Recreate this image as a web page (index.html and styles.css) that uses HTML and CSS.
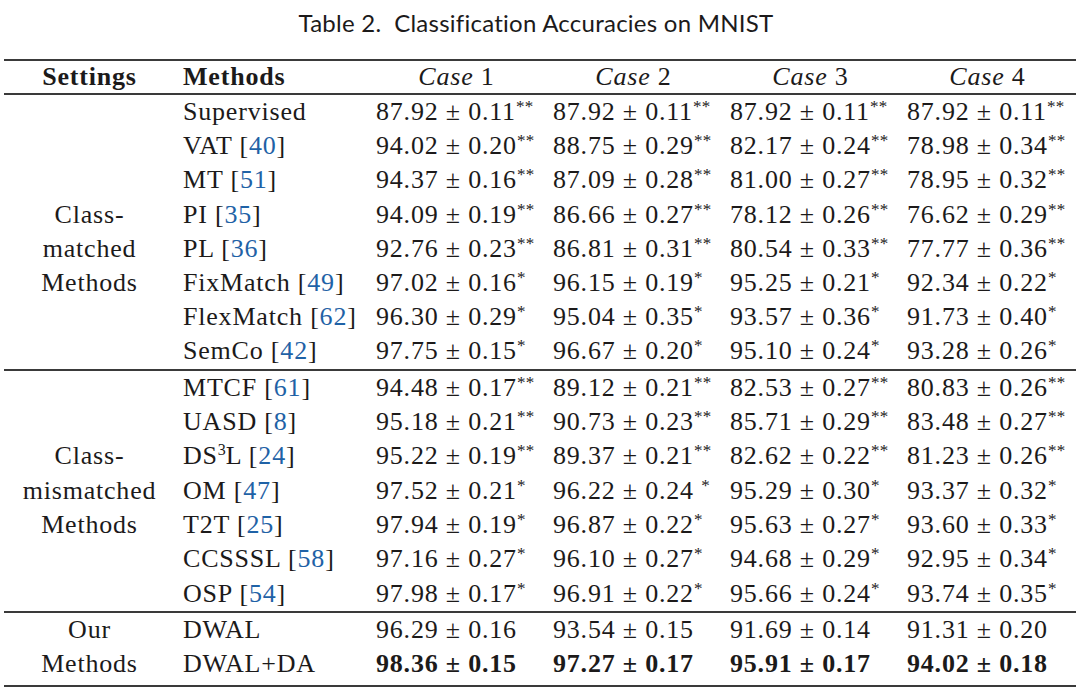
FILE: index.html
```html
<!DOCTYPE html>
<html>
<head>
<meta charset="utf-8">
<link rel="stylesheet" href="styles.css">
</head>
<body>
<div class="page">
  <div class="caption">Table 2.&nbsp; Classification Accuracies on MNIST</div>
  <div class="tbl">
    <div class="grp head">
      <div class="c set b">Settings</div>
      <div class="c m b">Methods</div>
      <div class="c h"><i>Case</i> 1</div>
      <div class="c h"><i>Case</i> 2</div>
      <div class="c h"><i>Case</i> 3</div>
      <div class="c h"><i>Case</i> 4</div>
    </div>
    <div class="grp g1">
      <div class="c set"></div><div class="c m">Supervised</div>
      <div class="c n">87.92 ± 0.11<sup>**</sup></div><div class="c n">87.92 ± 0.11<sup>**</sup></div><div class="c n">87.92 ± 0.11<sup>**</sup></div><div class="c n">87.92 ± 0.11<sup>**</sup></div>

      <div class="c set"></div><div class="c m">VAT [<span class="ref">40</span>]</div>
      <div class="c n">94.02 ± 0.20<sup>**</sup></div><div class="c n">88.75 ± 0.29<sup>**</sup></div><div class="c n">82.17 ± 0.24<sup>**</sup></div><div class="c n">78.98 ± 0.34<sup>**</sup></div>

      <div class="c set"></div><div class="c m">MT [<span class="ref">51</span>]</div>
      <div class="c n">94.37 ± 0.16<sup>**</sup></div><div class="c n">87.09 ± 0.28<sup>**</sup></div><div class="c n">81.00 ± 0.27<sup>**</sup></div><div class="c n">78.95 ± 0.32<sup>**</sup></div>

      <div class="c set">Class-</div><div class="c m">PI [<span class="ref">35</span>]</div>
      <div class="c n">94.09 ± 0.19<sup>**</sup></div><div class="c n">86.66 ± 0.27<sup>**</sup></div><div class="c n">78.12 ± 0.26<sup>**</sup></div><div class="c n">76.62 ± 0.29<sup>**</sup></div>

      <div class="c set">matched</div><div class="c m">PL [<span class="ref">36</span>]</div>
      <div class="c n">92.76 ± 0.23<sup>**</sup></div><div class="c n">86.81 ± 0.31<sup>**</sup></div><div class="c n">80.54 ± 0.33<sup>**</sup></div><div class="c n">77.77 ± 0.36<sup>**</sup></div>

      <div class="c set">Methods</div><div class="c m">FixMatch [<span class="ref">49</span>]</div>
      <div class="c n">97.02 ± 0.16<sup>*</sup></div><div class="c n">96.15 ± 0.19<sup>*</sup></div><div class="c n">95.25 ± 0.21<sup>*</sup></div><div class="c n">92.34 ± 0.22<sup>*</sup></div>

      <div class="c set"></div><div class="c m">FlexMatch [<span class="ref">62</span>]</div>
      <div class="c n">96.30 ± 0.29<sup>*</sup></div><div class="c n">95.04 ± 0.35<sup>*</sup></div><div class="c n">93.57 ± 0.36<sup>*</sup></div><div class="c n">91.73 ± 0.40<sup>*</sup></div>

      <div class="c set"></div><div class="c m">SemCo [<span class="ref">42</span>]</div>
      <div class="c n">97.75 ± 0.15<sup>*</sup></div><div class="c n">96.67 ± 0.20<sup>*</sup></div><div class="c n">95.10 ± 0.24<sup>*</sup></div><div class="c n">93.28 ± 0.26<sup>*</sup></div>
    </div>
    <div class="grp g2">
      <div class="c set"></div><div class="c m">MTCF [<span class="ref">61</span>]</div>
      <div class="c n">94.48 ± 0.17<sup>**</sup></div><div class="c n">89.12 ± 0.21<sup>**</sup></div><div class="c n">82.53 ± 0.27<sup>**</sup></div><div class="c n">80.83 ± 0.26<sup>**</sup></div>

      <div class="c set"></div><div class="c m">UASD [<span class="ref">8</span>]</div>
      <div class="c n">95.18 ± 0.21<sup>**</sup></div><div class="c n">90.73 ± 0.23<sup>**</sup></div><div class="c n">85.71 ± 0.29<sup>**</sup></div><div class="c n">83.48 ± 0.27<sup>**</sup></div>

      <div class="c set">Class-</div><div class="c m">DS<sup class="p">3</sup>L [<span class="ref">24</span>]</div>
      <div class="c n">95.22 ± 0.19<sup>**</sup></div><div class="c n">89.37 ± 0.21<sup>**</sup></div><div class="c n">82.62 ± 0.22<sup>**</sup></div><div class="c n">81.23 ± 0.26<sup>**</sup></div>

      <div class="c set">mismatched</div><div class="c m">OM [<span class="ref">47</span>]</div>
      <div class="c n">97.52 ± 0.21<sup>*</sup></div><div class="c n">96.22 ± 0.24 <sup>*</sup></div><div class="c n">95.29 ± 0.30<sup>*</sup></div><div class="c n">93.37 ± 0.32<sup>*</sup></div>

      <div class="c set">Methods</div><div class="c m">T2T [<span class="ref">25</span>]</div>
      <div class="c n">97.94 ± 0.19<sup>*</sup></div><div class="c n">96.87 ± 0.22<sup>*</sup></div><div class="c n">95.63 ± 0.27<sup>*</sup></div><div class="c n">93.60 ± 0.33<sup>*</sup></div>

      <div class="c set"></div><div class="c m">CCSSSL [<span class="ref">58</span>]</div>
      <div class="c n">97.16 ± 0.27<sup>*</sup></div><div class="c n">96.10 ± 0.27<sup>*</sup></div><div class="c n">94.68 ± 0.29<sup>*</sup></div><div class="c n">92.95 ± 0.34<sup>*</sup></div>

      <div class="c set"></div><div class="c m">OSP [<span class="ref">54</span>]</div>
      <div class="c n">97.98 ± 0.17<sup>*</sup></div><div class="c n">96.91 ± 0.22<sup>*</sup></div><div class="c n">95.66 ± 0.24<sup>*</sup></div><div class="c n">93.74 ± 0.35<sup>*</sup></div>
    </div>
    <div class="grp g3">
      <div class="c set">Our</div><div class="c m">DWAL</div>
      <div class="c n">96.29 ± 0.16</div><div class="c n">93.54 ± 0.15</div><div class="c n">91.69 ± 0.14</div><div class="c n">91.31 ± 0.20</div>

      <div class="c set">Methods</div><div class="c m">DWAL+DA</div>
      <div class="c n b">98.36 ± 0.15</div><div class="c n b">97.27 ± 0.17</div><div class="c n b">95.91 ± 0.17</div><div class="c n b">94.02 ± 0.18</div>
    </div>
  </div>
</div>
</body>
</html>
```

FILE: styles.css
```css
html, body {
  margin: 0;
  padding: 0;
  background: #ffffff;
}

.page {
  width: 1080px;
  padding-left: 4px;
  box-sizing: border-box;
  color: #1c1a1a;
}

.caption {
  margin-top: 8px;
  margin-bottom: 21px;
  height: 30px;
  line-height: 30px;
  text-align: center;
  font-family: "Lato", "Open Sans", sans-serif;
  font-size: 24px;
  letter-spacing: 0.25px;
  padding-right: 12px;
}

.tbl {
  width: 1072px;
  font-family: "Liberation Serif", "Times New Roman", serif;
  font-size: 26px;
  letter-spacing: 0.8px;
}

.grp {
  display: grid;
  grid-template-columns: 171px 193px repeat(4, 177px);
  grid-auto-rows: 34.2px;
  line-height: 34.2px;
  border-bottom: 2px solid #3a3a3a;
}

.head {
  border-top: 2px solid #3a3a3a;
  grid-auto-rows: 32px;
  line-height: 32px;
}

.g2 {
  grid-auto-rows: 34.4px;
  line-height: 34.4px;
}

.g3 {
  grid-auto-rows: 34px;
  line-height: 34px;
  padding-bottom: 4px;
}

.c {
  padding: 0 8px;
  white-space: nowrap;
  overflow: visible;
}

.set {
  text-align: center;
}

.h {
  text-align: center;
}

.b {
  font-weight: bold;
}

.ref {
  color: #1f62a6;
}

sup {
  font-size: 17px;
  line-height: 0;
  position: relative;
  top: -8px;
  vertical-align: baseline;
  letter-spacing: 0.3px;
}

sup.p {
  font-size: 16px;
  top: -9px;
  letter-spacing: 0;
}
```
